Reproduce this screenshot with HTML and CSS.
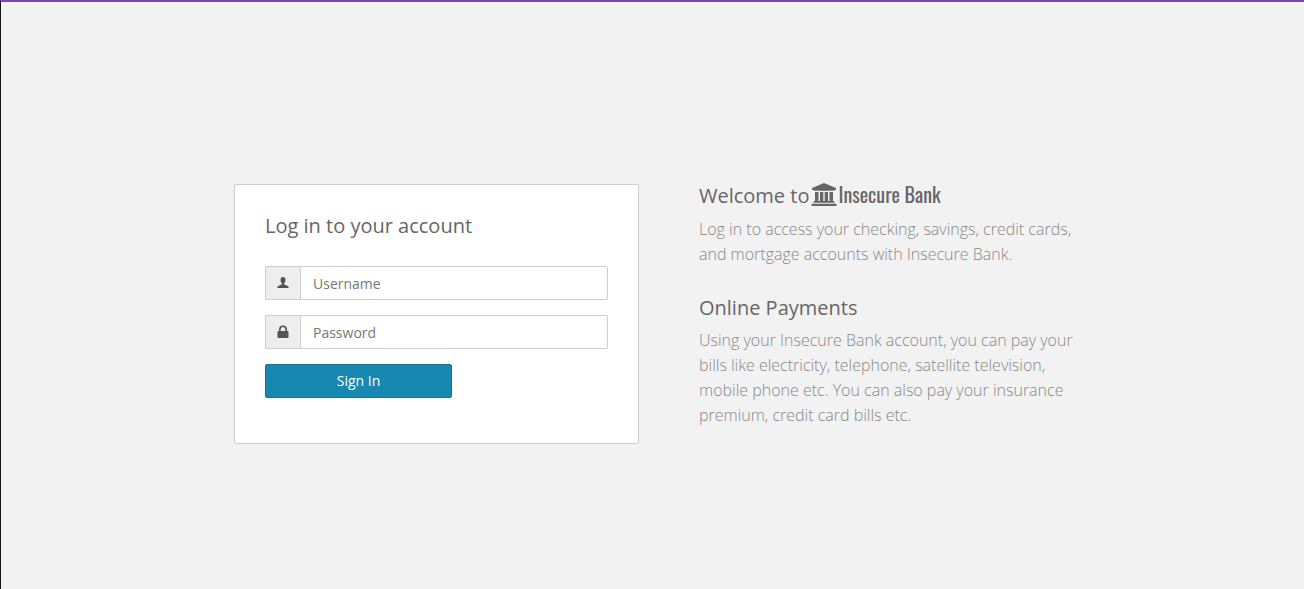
FILE: index.html
```html
<!DOCTYPE html>
<html lang="en">
<head>
<meta charset="utf-8">
<meta name="viewport" content="width=device-width, initial-scale=1">
<title>Insecure Bank</title>
<link rel="stylesheet" href="styles.css">
</head>
<body>
<main class="container">
  <form class="login-card">
    <h1 class="heading">Log in to your account</h1>
    <div class="input-group">
      <label class="addon" for="username" aria-label="Username">
        <svg width="12" height="12" viewBox="0 0 12 12"><path d="M6 0C4.400 0 3.500 1.100 3.500 2.700C3.500 4.300 4 5.500 4.800 6.200V7.300C4.500 8 1.500 8.600 .8 9.300C.4 9.800 .3 10.400 .3 11H11.700C11.700 10.400 11.600 9.800 11.200 9.300C10.500 8.600 7.500 8 7.200 7.300V6.200C8 5.500 8.500 4.300 8.500 2.700C8.500 1.100 7.600 0 6 0Z"/></svg>
      </label>
      <input class="field" id="username" type="text" placeholder="Username">
    </div>
    <div class="input-group">
      <label class="addon" for="password" aria-label="Password">
        <svg width="12" height="14" viewBox="0 0 12 14"><path fill-rule="evenodd" d="M2 6V4.500C2 2 3.500.5 6 .5S10 2 10 4.500V6H10.700Q11.500 6 11.500 6.800V12.200Q11.500 13 10.700 13H1.300Q.5 13 .5 12.200V6.800Q.5 6 1.300 6ZM3.700 6H8.300V4.500C8.300 3 7.400 2.100 6 2.100S3.700 3 3.700 4.500Z"/></svg>
      </label>
      <input class="field" id="password" type="password" placeholder="Password">
    </div>
    <button class="sign-in" type="submit">Sign In</button>
  </form>
  <div class="intro">
    <section>
      <h2 class="heading welcome">Welcome to
        <span class="brand"><svg width="26" height="24" viewBox="0 0 26 24"><path d="M13 0L25 5V7H23.500Q23.400 7.800 22.500 7.800H3.500Q2.600 7.800 2.500 7H1V5ZM4 9H7.500V18H9V9H12.300V18H13.700V9H17V18H18.500V9H22V18H22.600Q23.500 18 23.500 19V19.700H2.500V19Q2.500 18 3.400 18H4ZM1.500 20.700H24.500Q25.500 20.700 25.500 21.700V23H.5V21.700Q.5 20.700 1.500 20.700Z"/></svg><strong class="brand-name">Insecure Bank</strong></span>
      </h2>
      <p class="copy">Log in to access your checking, savings, credit cards, and mortgage accounts with Insecure Bank.</p>
    </section>
    <section>
      <h2 class="heading">Online Payments</h2>
      <p class="copy">Using your Insecure Bank account, you can pay your bills like electricity, telephone, satellite television, mobile phone etc. You can also pay your insurance premium, credit card bills etc.</p>
    </section>
  </div>
</main>
</body>
</html>
```
FILE: styles.css
```css
* { box-sizing: border-box; }
body {
  margin: 0;
  min-height: 100vh;
  background: #f2f2f2;
  border-top: 2px solid #7748a8;
  border-left: 1px solid #17171a;
  color: #666;
  font-family: "Open Sans", sans-serif;
  font-size: 14px;
}
svg { display: block; fill: currentColor; }
.container {
  display: grid;
  grid-template-columns: 405fr 372fr;
  gap: 60px;
  align-items: start;
  max-width: 837px;
  margin: 0 auto;
  padding-top: 182px;
}
.login-card {
  padding: 26px 30px 45px;
  background: #fff;
  border: 1px solid #ccc;
  border-radius: 2px;
}
.heading {
  margin: 0;
  font-size: 20px;
  font-weight: 400;
  line-height: 30px;
}
.login-card .heading { margin-bottom: 25px; }
.input-group { display: flex; height: 34px; margin-bottom: 15px; }
.addon {
  display: flex;
  align-items: center;
  justify-content: center;
  width: 35px;
  background: #eee;
  border: 1px solid #ccc;
  border-right: 0;
  border-radius: 2px 0 0 2px;
  color: #555;
}
.field {
  flex: 1;
  min-width: 0;
  padding: 6px 12px;
  background: #fff;
  border: 1px solid #ccc;
  border-radius: 0 2px 2px 0;
  color: #555;
  font: inherit;
}
.field::placeholder { color: #777; opacity: 1; }
.sign-in {
  display: block;
  width: 187px;
  height: 34px;
  padding: 0 0 2px;
  background: #1788af;
  border: 1px solid #13728f;
  border-radius: 2px;
  color: #fff;
  font: inherit;
}
.intro { display: grid; gap: 26px; margin-right: -12px; }
.heading.welcome { display: flex; align-items: center; gap: 2px; margin: -4px 0 2px; }
.brand { display: flex; align-items: center; gap: 1px; padding-bottom: 2px; }
.brand-name {
  padding-bottom: 2px;
  font-family: Oswald, "Roboto Condensed", "Liberation Sans Narrow", sans-serif;
  font-size: 20px;
  font-weight: 400;
  line-height: 28px;
  white-space: nowrap;
}
.copy {
  margin: 5px 0 0;
  color: #888;
  font-size: 16px;
  font-weight: 300;
  line-height: 25px;
}
```
